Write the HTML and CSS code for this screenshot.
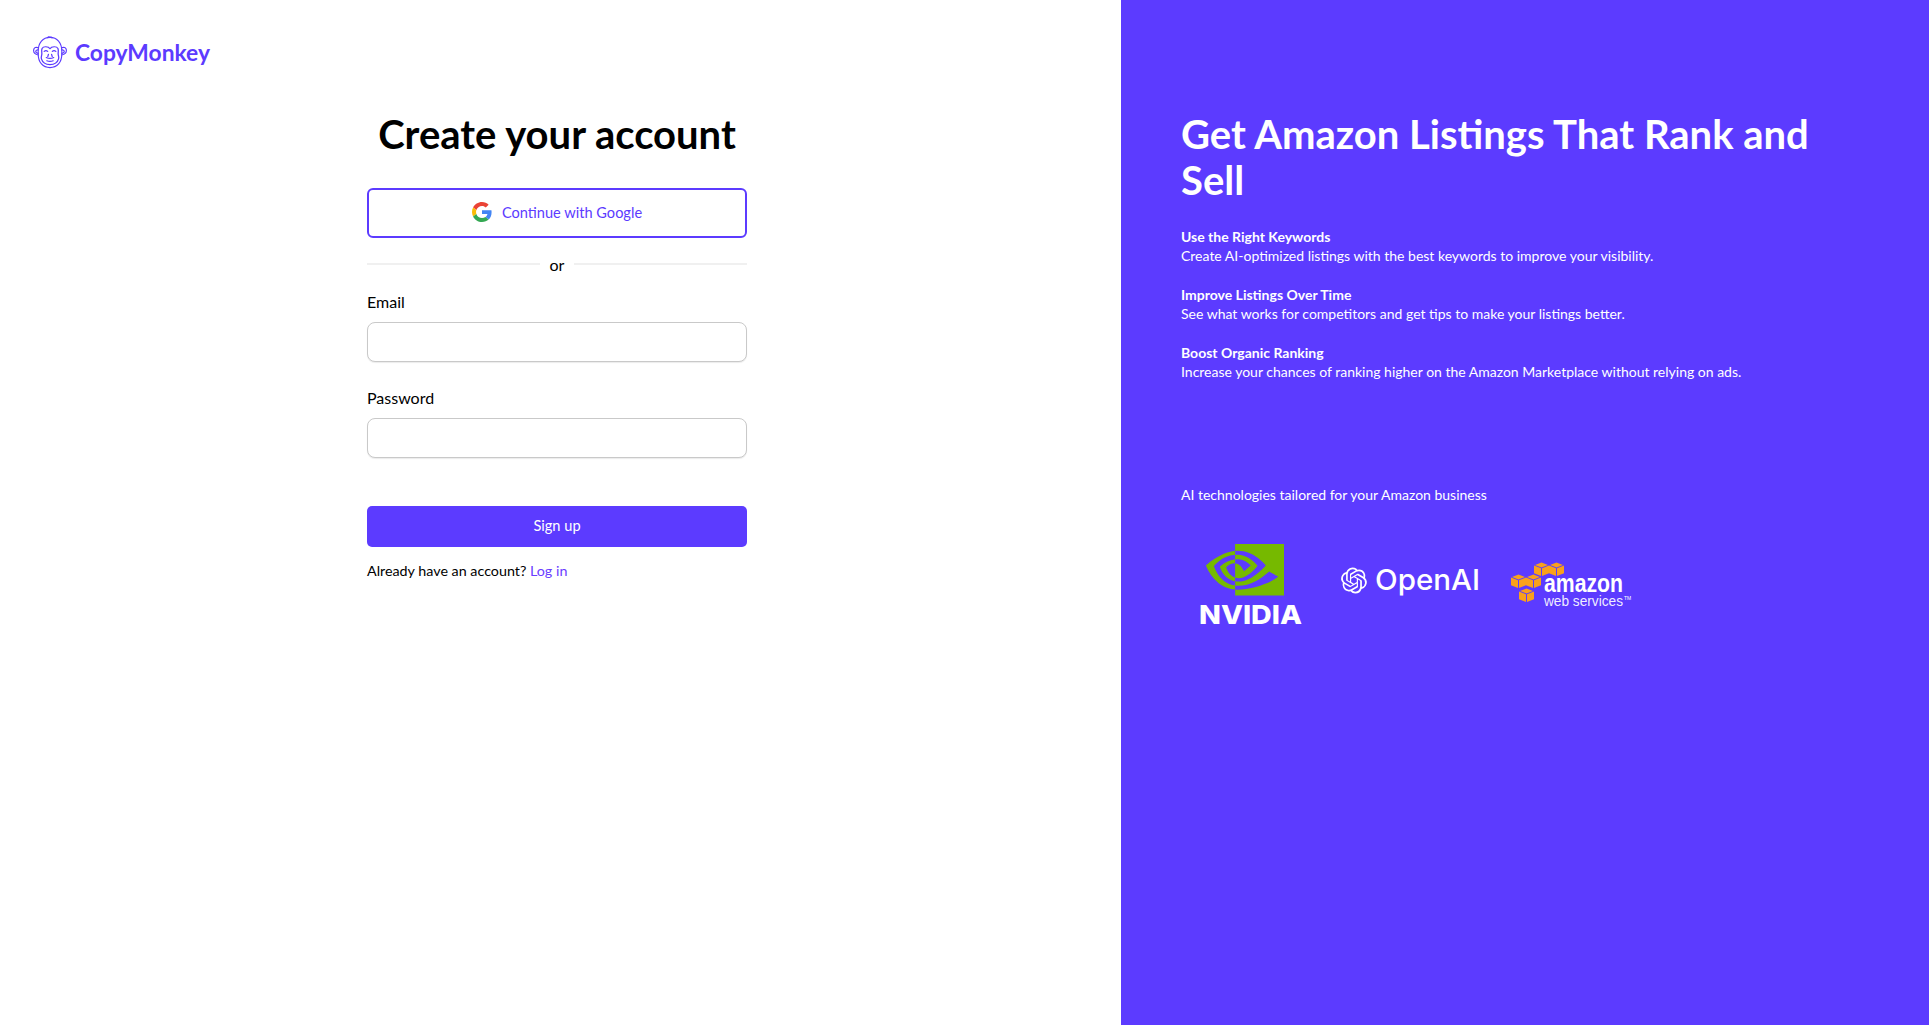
FILE: index.html
```html
<!DOCTYPE html>
<html lang="en">
<head>
<meta charset="utf-8">
<title>Create your account</title>
<link rel="stylesheet" href="styles.css">
</head>
<body>
<div class="page">
  <main class="left">
    <a class="brand" href="#">
      <svg class="brand-icon" viewBox="0 0 36 36" fill="none" stroke="#5c3bff" stroke-width="1.2" stroke-linecap="round" stroke-linejoin="round">
        <path d="M15.500 2.800c.8-.9 1.600-1 2.200-.3.700-.6 1.800-.4 2.500.5"/>
        <path d="M5.500 17c0-9 5-14.500 12.500-14.500S30.500 8 30.500 17v3c0 9-5 14.500-12.500 14.500S5.500 29 5.500 20z"/>
        <path d="M5.800 13.500c-2.500-1-4.800-.2-5.100 2.200-.3 2.700 1.700 5 4.900 5.500M30.200 13.500c2.500-1 4.800-.2 5.100 2.200.3 2.700-1.700 5-4.900 5.500"/>
        <path d="M5.500 15.800c-1.200-.2-2.600.3-2.600 1.500 0 1.100 1.200 2 2.600 2.200M30.500 15.800c1.200-.2 2.600.3 2.600 1.500 0 1.100-1.200 2-2.600 2.200"/>
        <g transform="translate(18 0) scale(1.12 1) translate(-18 0)">
          <path d="M18 14.500c-1.500-2.600-6.300-2.800-7.500-.3-.8 1.700-.2 4-.2 5.300 0 2.500-1 3.500-.4 5.800 1 3.700 4.300 6 8.100 6s7.100-2.300 8.100-6c.6-2.300-.4-3.300-.4-5.800 0-1.300.6-3.600-.2-5.300-1.200-2.500-6-2.300-7.500.3z"/>
          <path d="M12.500 17.300c1-.9 2.300-.9 3.300 0M20.200 17.300c1-.9 2.300-.9 3.300 0M16.500 20.500l-.6 2.300M19.500 20.500l.6 2.300M14.500 23.800c1.800 1 5.200 1 7 0M15 27.300c1.800.8 4.200.8 6 0"/>
        </g>
      </svg>
      <span class="brand-name">CopyMonkey</span>
    </a>
    <div class="form-wrap">
      <h1 class="title">Create your account</h1>
      <button class="google" type="button">
        <svg class="g-icon" viewBox="0 0 48 48">
          <path fill="#ea4335" d="M24 9.500c3.900 0 6.900 1.600 9.100 3.600l6.800-6.600C35.800 2.700 30.400 0 24 0 14.600 0 6.600 5.400 2.600 13.300l7.900 6.100C12.400 13.700 17.700 9.500 24 9.500z"/>
          <path fill="#4285f4" d="M47 24.500c0-1.600-.1-3.100-.4-4.500H24v9h13c-.6 3-2.300 5.500-4.800 7.200l7.700 6C44.400 37.900 47 31.800 47 24.500z"/>
          <path fill="#fbbc05" d="M10.500 28.600c-.5-1.500-.8-3-.8-4.600s.3-3.100.8-4.600l-7.900-6.100C.9 16.500 0 20.100 0 24s.9 7.500 2.600 10.700z"/>
          <path fill="#34a853" d="M24 48c6.500 0 11.900-2.100 15.900-5.800l-7.700-6c-2.200 1.500-5 2.300-8.200 2.300-6.300 0-11.600-4.200-13.500-9.900l-7.900 6.100C6.600 42.600 14.600 48 24 48z"/>
        </svg>
        <span>Continue with Google</span>
      </button>
      <div class="divider"><span>or</span></div>
      <label class="field">
        <span class="field-label">Email</span>
        <input class="input" type="email">
      </label>
      <label class="field">
        <span class="field-label">Password</span>
        <input class="input" type="password">
      </label>
      <button class="submit" type="button">Sign up</button>
      <p class="login">Already have an account? <a href="#">Log in</a></p>
    </div>
  </main>
  <aside class="right">
    <h2 class="headline">Get Amazon Listings That Rank and Sell</h2>
    <div class="benefits">
      <p class="benefit"><strong>Use the Right Keywords</strong><br>Create AI-optimized listings with the best keywords to improve your visibility.</p>
      <p class="benefit"><strong>Improve Listings Over Time</strong><br>See what works for competitors and get tips to make your listings better.</p>
      <p class="benefit"><strong>Boost Organic Ranking</strong><br>Increase your chances of ranking higher on the Amazon Marketplace without relying on ads.</p>
    </div>
    <p class="tailored">AI technologies tailored for your Amazon business</p>
    <div class="logos">
      <svg class="logo-nvidia" viewBox="1181 535 140 95">
        <path fill="#76b900" transform="translate(1206 530.800) scale(3.250)" d="M8.948 8.798v-1.430a6.700 6.700 0 0 1 .424-.018c3.922-.124 6.493 3.374 6.493 3.374s-2.774 3.851-5.750 3.851c-.398 0-.787-.062-1.158-.185v-4.346c1.528.185 1.837.857 2.747 2.385l2.040-1.714s-1.492-1.952-4-1.952a6.016 6.016 0 0 0-.796.035m0-4.735v2.138l.424-.027c5.450-.185 9.010 4.470 9.010 4.470s-4.080 4.964-8.330 4.964c-.370 0-.733-.035-1.095-.097v1.325c.300.035.610.062.910.062 3.957 0 6.820-2.023 9.593-4.408.459.371 2.340 1.263 2.730 1.652-2.633 2.208-8.772 3.984-12.253 3.984-.335 0-.653-.018-.971-.053v1.864H24V4.063zm0 10.326v1.131c-3.657-.654-4.673-4.460-4.673-4.460s1.758-1.944 4.673-2.262v1.237H8.940c-1.528-.186-2.730 1.245-2.730 1.245s.680 2.412 2.739 3.110M2.456 10.900s2.164-3.197 6.500-3.533V6.201C4.153 6.590 0 10.653 0 10.653s2.350 6.802 8.948 7.420v-1.237c-4.840-.600-6.492-5.936-6.492-5.936z"/>
        <text class="nv-text" x="1199" y="624" textLength="103" lengthAdjust="spacingAndGlyphs">NVIDIA</text>
      </svg>
      <svg class="logo-openai" viewBox="1321 535 175 95">
        <path fill="#fff" transform="translate(1341 567.500) scale(1.080)" d="M22.2819 9.8211a5.9847 5.9847 0 0 0-.5157-4.9108 6.0462 6.0462 0 0 0-6.5098-2.9A6.0651 6.0651 0 0 0 4.9807 4.1818a5.9847 5.9847 0 0 0-3.9977 2.9 6.0462 6.0462 0 0 0 .7427 7.0966 5.98 5.98 0 0 0 .511 4.9107 6.051 6.051 0 0 0 6.5146 2.9001A5.9847 5.9847 0 0 0 13.2599 24a6.0557 6.0557 0 0 0 5.7718-4.2058 5.9894 5.9894 0 0 0 3.9977-2.9001 6.0557 6.0557 0 0 0-.7475-7.0729zm-9.022 12.6081a4.4755 4.4755 0 0 1-2.8764-1.0408l.1419-.0804 4.7783-2.7582a.7948.7948 0 0 0 .3927-.6813v-6.7369l2.02 1.1686a.071.071 0 0 1 .038.052v5.5826a4.504 4.504 0 0 1-4.4945 4.4944zm-9.6607-4.1254a4.4708 4.4708 0 0 1-.5346-3.0137l.142.0852 4.783 2.7582a.7712.7712 0 0 0 .7806 0l5.8428-3.3685v2.3324a.0804.0804 0 0 1-.0332.0615L9.74 19.9502a4.4992 4.4992 0 0 1-6.1408-1.6464zM2.3408 7.8956a4.485 4.485 0 0 1 2.3655-1.9728V11.6a.7664.7664 0 0 0 .3879.6765l5.8144 3.3543-2.0201 1.1685a.0757.0757 0 0 1-.071 0l-4.8303-2.7865A4.504 4.504 0 0 1 2.3408 7.872zm16.5963 3.8558L13.1038 8.364 15.1192 7.2a.0757.0757 0 0 1 .071 0l4.8303 2.7913a4.4944 4.4944 0 0 1-.6765 8.1042v-5.6772a.79.79 0 0 0-.407-.667zm2.0107-3.0231l-.142-.0852-4.7735-2.7818a.7759.7759 0 0 0-.7854 0L9.409 9.2297V6.8974a.0662.0662 0 0 1 .0284-.0615l4.8303-2.7866a4.4992 4.4992 0 0 1 6.6802 4.66zM8.3065 12.863l-2.02-1.1638a.0804.0804 0 0 1-.038-.0567V6.0742a4.4992 4.4992 0 0 1 7.3757-3.4537l-.142.0805L8.704 5.459a.7948.7948 0 0 0-.3927.6813zm1.0976-2.3654l2.602-1.4998 2.6069 1.4998v2.9994l-2.5974 1.4997-2.6067-1.4997Z"/>
        <text class="oa-text" x="1375" y="590" textLength="105" lengthAdjust="spacingAndGlyphs">OpenAI</text>
      </svg>
      <svg class="logo-aws" viewBox="1496 535 145 95">
        <defs>
          <g id="cube" fill="#f9a11b">
            <path d="M1 3L7.500.5 14 3 7.500 5.500z"/>
            <path d="M0 3.500l7 2.800V14l-7-2.800zM15 3.500L8 6.300V14l7-2.800z"/>
          </g>
        </defs>
        <use href="#cube" x="1534" y="562"/>
        <use href="#cube" x="1549" y="562"/>
        <use href="#cube" x="1511" y="574"/>
        <use href="#cube" x="1526" y="574"/>
        <use href="#cube" x="1519" y="588"/>
        <text class="aws-a" x="1544" y="592" textLength="79" lengthAdjust="spacingAndGlyphs">amazon</text>
        <text class="aws-b" x="1544" y="606" textLength="79" lengthAdjust="spacingAndGlyphs">web services</text>
        <text class="aws-tm" x="1624" y="600">TM</text>
      </svg>
    </div>
  </aside>
</div>
</body>
</html>
```

FILE: styles.css
```css
* { box-sizing: border-box; }
html, body { margin: 0; height: 100%; }
body { font-family: Lato, "Open Sans", sans-serif; color: #000; background: #fff; overflow: hidden; }
.page { display: flex; height: 1025px; }
.left { width: 1121px; flex: none; padding: 35px 7px 0 0; display: flex; flex-direction: column; }
.brand { display: flex; align-items: center; gap: 8px; padding-left: 33px; text-decoration: none; height: 34px; }
.brand-icon { width: 34px; height: 34px; flex: none; }
.brand-name { font-size: 22.8px; font-weight: 700; color: #5c3bff; line-height: 1; }
.form-wrap { width: 380px; margin: 41px auto 0; }
.title { margin: 0; font-size: 40px; font-weight: 700; line-height: 48px; text-align: center; }
.google { margin-top: 30px; width: 100%; height: 50px; padding: 0 0 2px; display: flex; align-items: center; justify-content: center; gap: 10px; background: #fff; border: 2px solid #5c3bff; border-radius: 6px; font: 400 14.6px Lato, sans-serif; color: #5c3bff; }
.g-icon { width: 20px; height: 20px; }
.divider { margin-top: 16px; height: 20px; display: flex; align-items: center; gap: 10px; font-size: 16px; }
.divider::before, .divider::after { content: ""; flex: 1; height: 2px; background: #f0f0f0; }
.field { display: block; margin-top: 18px; }
.field + .field { margin-top: 26px; }
.field-label { display: block; font-size: 16px; line-height: 20px; margin-bottom: 10px; }
.input { display: block; width: 100%; height: 40px; border: 1px solid #c9c9c9; border-radius: 8px; background: #fff; box-shadow: 0 1px 1px rgba(0,0,0,.08); }
.submit { margin-top: 48px; display: block; width: 100%; height: 41px; padding: 0 0 2px; border: 0; border-radius: 5px; background: #5c3bff; color: #fff; font: 400 14.6px Lato, sans-serif; }
.login { margin: 15px 0 0; font-size: 14.3px; line-height: 18px; }
.login a { color: #6a3dff; text-decoration: none; }
.right { flex: 1; background: #5c3bff; color: #fff; padding: 111px 60px 0; }
.headline { margin: 0; font-size: 40px; font-weight: 700; line-height: 46px; max-width: 640px; }
.benefits { margin-top: 24px; }
.benefit { margin: 0 0 20px; font-size: 14px; line-height: 19px; }
.benefit strong { font-weight: 700; }
.tailored { margin: 105px 0 0; font-size: 14px; line-height: 18px; }
.logos { margin-top: 31px; display: flex; }
.logo-nvidia { width: 140px; height: 95px; }
.logo-openai { width: 175px; height: 95px; }
.logo-aws { width: 145px; height: 95px; }
.nv-text { font: 800 26px Inter, sans-serif; fill: #fff; }
.oa-text { font: 500 29px Inter, sans-serif; fill: #fff; }
.aws-a { font: 700 26px "Liberation Sans", sans-serif; fill: #fff; }
.aws-b { font: 400 14.5px "Liberation Sans", sans-serif; fill: #fff; fill-opacity: .92; }
.aws-tm { font: 400 5px "Liberation Sans", sans-serif; fill: #fff; }
```
